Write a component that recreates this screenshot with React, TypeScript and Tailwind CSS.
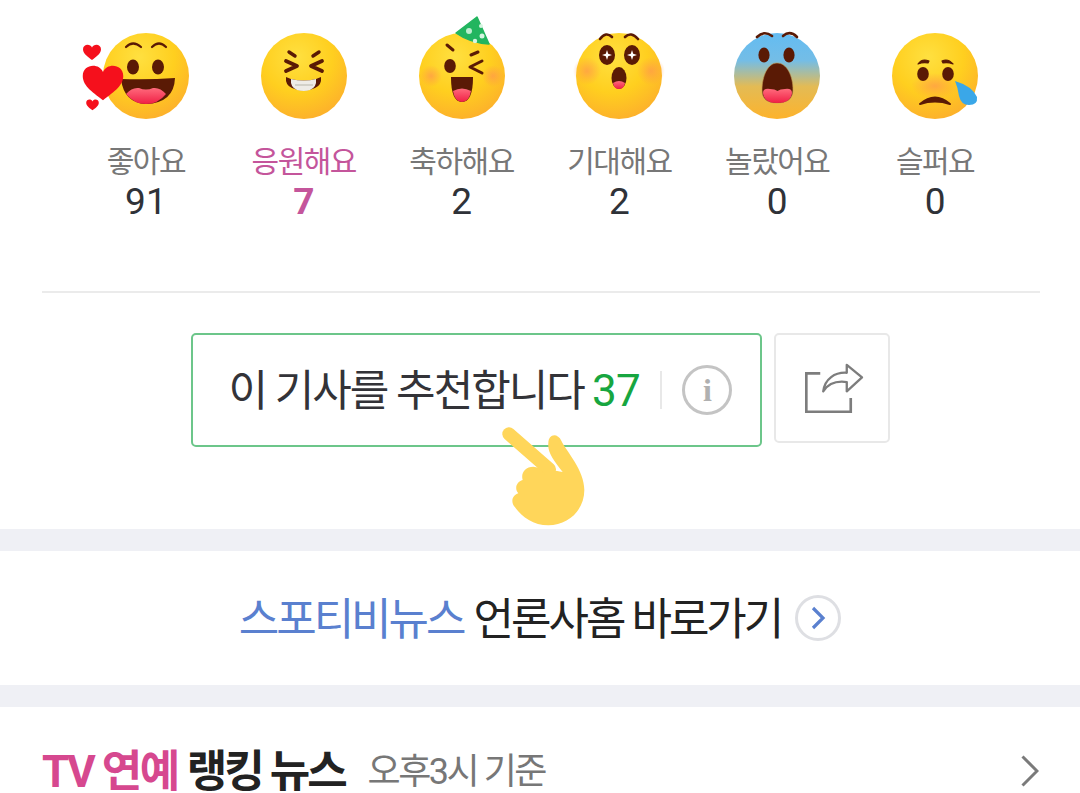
const D = "#5a1a05";

function Defs() {
  return (
    <svg width="0" height="0" className="absolute">
      <defs>
        <radialGradient id="gY" cx="0.42" cy="0.28" r="0.82">
          <stop offset="0" stopColor="#ffe040" />
          <stop offset="0.5" stopColor="#ffcf1f" />
          <stop offset="1" stopColor="#fca92e" />
        </radialGradient>
        <linearGradient id="gB" x1="0" y1="0" x2="0" y2="1">
          <stop offset="0" stopColor="#63bcf2" />
          <stop offset="0.32" stopColor="#74bde6" />
          <stop offset="0.62" stopColor="#e3bb55" />
          <stop offset="1" stopColor="#fdb32c" />
        </linearGradient>
        <radialGradient id="gC">
          <stop offset="0" stopColor="#ff9a4a" stopOpacity="0.75" />
          <stop offset="1" stopColor="#ff9a4a" stopOpacity="0" />
        </radialGradient>
        <linearGradient id="gT" x1="0" y1="0" x2="0" y2="1">
          <stop offset="0" stopColor="#ff6a7c" />
          <stop offset="1" stopColor="#f01f45" />
        </linearGradient>
      </defs>
    </svg>
  );
}

function Face({ children, fill = "url(#gY)" }: { children: React.ReactNode; fill?: string }) {
  return (
    <svg width="120" height="110" viewBox="0 0 120 110" className="overflow-visible">
      <circle cx="60" cy="60" r="43" fill={fill} />
      {children}
    </svg>
  );
}

const Heart = ({ x, y, s }: { x: number; y: number; s: number }) => (
  <path
    transform={`translate(${x} ${y}) scale(${s})`}
    d="M0 -6 C-3 -13 -15 -12 -15 -3 C-15 5 -6 10 0 15 C6 10 15 5 15 -3 C15 -12 3 -13 0 -6Z"
    fill="#f5101c"
  />
);

const Brow = ({ d, w = 2.6 }: { d: string; w?: number }) => (
  <path d={d} fill="none" stroke={D} strokeWidth={w} strokeLinecap="round" strokeLinejoin="round" />
);

const faces = [
  <Face key="a">
    <Brow d="M40 31 Q47 24 55 31" w={2.2} />
    <Brow d="M66 31 Q73 24 80 31" w={2.2} />
    <ellipse cx="47" cy="51" rx="6" ry="7.5" fill={D} />
    <ellipse cx="72" cy="51" rx="6" ry="7.5" fill={D} />
    <path d="M35 63 Q62 64 89 62 Q88 87 60 88 Q38 87 35 63Z" fill={D} />
    <path d="M40 78 Q46 71 53 72 Q60 75 67 72 Q74 71 80 78 Q72 88 60 88 Q48 88 40 78Z" fill="url(#gT)" />
    <Heart x={17} y={64} s={1.35} />
    <Heart x={6} y={35} s={0.6} />
    <Heart x={6.5} y={88} s={0.42} />
  </Face>,
  <Face key="b">
    <Brow d="M45 36 L51 40" w={3.4} />
    <Brow d="M75 36 L69 40" w={3.4} />
    <Brow d="M42 45 L53 50 L42 55" w={3.8} />
    <Brow d="M78 45 L67 50 L78 55" w={3.8} />
    <path d="M42 61 L47 63 Q60 66 72 63 L77 61 Q78 69 71 72 Q60 77 48 72 Q41 69 42 61Z" fill={D} />
    <path d="M47 63 Q60 66 72 63 Q73 71 66 74 Q60 76 53 74 Q46 71 47 63Z" fill="#eeece6" />
    <path d="M51 69 H69" stroke="#c2bfb4" strokeWidth="1.2" />
  </Face>,
  <Face key="c">
    <path d="M75 1 L54 17 Q68 27 87 28 Z" fill="#22b55f" stroke="#22b55f" strokeWidth="1.5" strokeLinejoin="round" />
    <circle cx="67" cy="15" r="3" fill="#bdeccf" />
    <circle cx="79" cy="10" r="2" fill="#d5f5e1" />
    <circle cx="80" cy="20" r="2.5" fill="#d5f5e1" />
    <circle cx="73" cy="25" r="2.2" fill="#d5f5e1" />
    <circle cx="29" cy="60" r="11" fill="url(#gC)" />
    <circle cx="91" cy="60" r="11" fill="url(#gC)" />
    <Brow d="M45 29 L51 34" w={3} />
    <Brow d="M69 39 L76 36" w={3} />
    <ellipse cx="48" cy="50" rx="5.8" ry="7" fill={D} />
    <Brow d="M80 45 L68 51 L80 57" w={3} />
    <path d="M49 61 H71 Q71 86 60 86 Q49 86 49 61Z" fill={D} />
    <path d="M51 75 Q60 70 69 75 Q67 86 60 86 Q53 86 51 75Z" fill="url(#gT)" />
  </Face>,
  <Face key="d">
    <circle cx="28" cy="55" r="14" fill="url(#gC)" />
    <circle cx="92" cy="55" r="14" fill="url(#gC)" />
    <Brow d="M41 23 Q47 15 53 21" />
    <Brow d="M66 21 Q72 15 79 23" />
    <ellipse cx="48" cy="39" rx="8" ry="10" fill={D} />
    <ellipse cx="73" cy="39" rx="8" ry="10" fill={D} />
    <path d="M48 34 L49.2 37.8 L53 39 L49.2 40.2 L48 44 L46.8 40.2 L43 39 L46.8 37.8Z" fill="#fff" />
    <path d="M73 34 L74.2 37.8 L78 39 L74.2 40.2 L73 44 L71.8 40.2 L68 39 L71.8 37.8Z" fill="#fff" />
    <ellipse cx="60" cy="62" rx="7.5" ry="11" fill={D} />
    <path d="M54 67 Q60 63 66 67 Q65 73 60 73 Q55 73 54 67Z" fill="url(#gT)" />
  </Face>,
  <Face key="e" fill="url(#gB)">
    <Brow d="M40 21 Q47 14 55 20" />
    <Brow d="M66 20 Q73 14 80 21" />
    <ellipse cx="47" cy="39" rx="5.6" ry="7.5" fill={D} />
    <ellipse cx="72" cy="39" rx="5.6" ry="7.5" fill={D} />
    <path d="M60 47 C70 47 76 60 76 74 C76 83 70 87 60 87 C50 87 45 83 45 74 C45 60 51 47 60 47Z" fill={D} stroke="#c49a50" strokeWidth="0.6" />
    <path d="M46 77 Q46 72 53 73 Q58 73 60.5 75 Q63 73 68 73 Q75 72 75 77 Q74 87 60 87 Q47 87 46 77Z" fill="url(#gT)" />
  </Face>,
  <Face key="f">
    <ellipse cx="60" cy="70" rx="24" ry="13" fill="url(#gC)" />
    <path d="M43 48 Q47 42 54 45 L53 47 Q48 46 43 48Z" fill={D} stroke={D} strokeWidth="1.2" strokeLinejoin="round" />
    <path d="M67 45 Q73 42 78 48 Q73 46 68 47Z" fill={D} stroke={D} strokeWidth="1.2" strokeLinejoin="round" />
    <ellipse cx="48" cy="58" rx="5.8" ry="7" fill={D} />
    <ellipse cx="73" cy="58" rx="5.8" ry="7" fill={D} />
    <path d="M45 88 Q60 75 75 88 Q60 83 45 88Z" fill={D} stroke={D} strokeWidth="2" strokeLinejoin="round" />
    <path d="M80 65 Q97 70 102 81 Q103 89 94 89 Q86 89 84 80 Q83 72 80 65Z" fill="#3aa7e8" />
  </Face>,
];

const items = [
  { label: "좋아요", n: "91" },
  { label: "응원해요", n: "7", on: true },
  { label: "축하해요", n: "2" },
  { label: "기대해요", n: "2" },
  { label: "놀랐어요", n: "0" },
  { label: "슬퍼요", n: "0" },
];

export default function App() {
  return (
    <div className="relative h-[793px] w-[1080px] overflow-hidden bg-white font-['Roboto','Noto_Sans_CJK_KR',sans-serif]">
      <Defs />
      <section className="grid h-[291px] grid-cols-6 pl-[67px] pr-[66px] pt-[16px]">
        {items.map((it, i) => (
          <div key={it.label} className="flex flex-col items-center">
            {faces[i]}
            <span className={`mt-[17px] text-[30px] leading-[38px] tracking-[-1.5px] ${it.on ? "text-[#c4559b]" : "text-[#777777]"}`}>
              {it.label}
            </span>
            <span className={`text-[37px] leading-[42px] ${it.on ? "font-bold text-[#c4559b]" : "text-[#2f3238]"}`}>
              {it.n}
            </span>
          </div>
        ))}
      </section>
      <div className="mx-[42px] h-[2px] w-[998px] bg-[#ebebeb]" />
      <section className="flex h-[236px] items-start justify-center gap-[12px] pt-[40px]">
        <button className="flex h-[114px] w-[571px] items-center rounded-[5px] border-2 border-[#6cc68a] pl-[36px]">
          <span className="pt-[2px] text-[43px] tracking-[-2px] text-[#333338]">이 기사를 추천합니다</span>
          <span className="ml-[8px] pt-[2px] text-[44px] tracking-[-0.5px] text-[#17a640]">37</span>
          <span className="ml-[20px] h-[38px] w-[2px] bg-[#e8e8e8]" />
          <span className="ml-[20px] flex h-[50px] w-[50px] items-center justify-center rounded-full border-[3px] border-[#c4c4c4] font-['Liberation_Serif',serif] text-[32px] font-bold leading-none text-[#b0b0b0]">
            i
          </span>
        </button>
        <button className="flex h-[110px] w-[116px] items-center justify-center rounded-[5px] border-2 border-[#e8e8e8] pl-[6px]">
          <svg width="59" height="50" viewBox="75 65 178 150" fill="none" stroke="#7d7d7d">
            <path d="M121 96 H79 V212 H213 V170" strokeWidth="8" />
            <path d="M130 150 C135 112 165 92 201 94 V70 L247 108 L201 150 V122 C172 118 146 125 130 150Z" strokeWidth="7" strokeLinejoin="round" />
          </svg>
        </button>
      </section>
      <div className="h-[22px] bg-[#eff0f5]" />
      <section className="flex h-[134px] items-center justify-center text-[44px] tracking-[-3px]">
        <span className="pt-[4px] text-[#5a80cf]">스포티비뉴스</span>
        <span className="ml-[10px] pt-[4px] text-[#222222]">언론사홈 바로가기</span>
        <span className="ml-[14px] flex h-[46px] w-[46px] items-center justify-center rounded-full border-[3px] border-[#dedfe3]">
          <svg width="16" height="24" viewBox="0 0 16 24" fill="none" stroke="#5a80cf" strokeWidth="3.2">
            <path d="M3 2 L13 12 L3 22" />
          </svg>
        </span>
      </section>
      <div className="h-[22px] bg-[#eff0f5]" />
      <section className="flex items-center pl-[42px] pr-[41px] pt-[44px]">
        <span className="text-[44px] font-bold leading-[42px] tracking-[-2.5px] text-[#d6488f]">TV 연예</span>
        <span className="ml-[9px] text-[44px] font-bold leading-[42px] tracking-[-3px] text-[#222222]">랭킹 뉴스</span>
        <span className="ml-[23px] text-[36px] leading-[42px] tracking-[-2.5px] text-[#777777]">오후3시 기준</span>
        <svg className="-mt-[3px] ml-auto" width="18" height="32" viewBox="0 0 18 32" fill="none" stroke="#7a7a7a" strokeWidth="3">
          <path d="M1.5 1.5 L16 16 L1.5 30.5" />
        </svg>
      </section>
      <svg className="absolute left-[490px] top-[420px]" width="110" height="115" viewBox="0 0 330 345" fill="#ffd65a">
        <path d="M175 70 C175 40 203 38 214 62 C230 95 283 150 283 210 C283 270 235 316 175 316 C130 316 95 290 75 262 C60 245 68 225 85 220 C72 205 80 185 98 180 C92 160 105 140 130 140 L218 156 C190 120 172 95 175 70Z" />
        <path d="M57 42 L178 148" stroke="#ffd65a" strokeWidth="40" strokeLinecap="round" />
      </svg>
    </div>
  );
}
